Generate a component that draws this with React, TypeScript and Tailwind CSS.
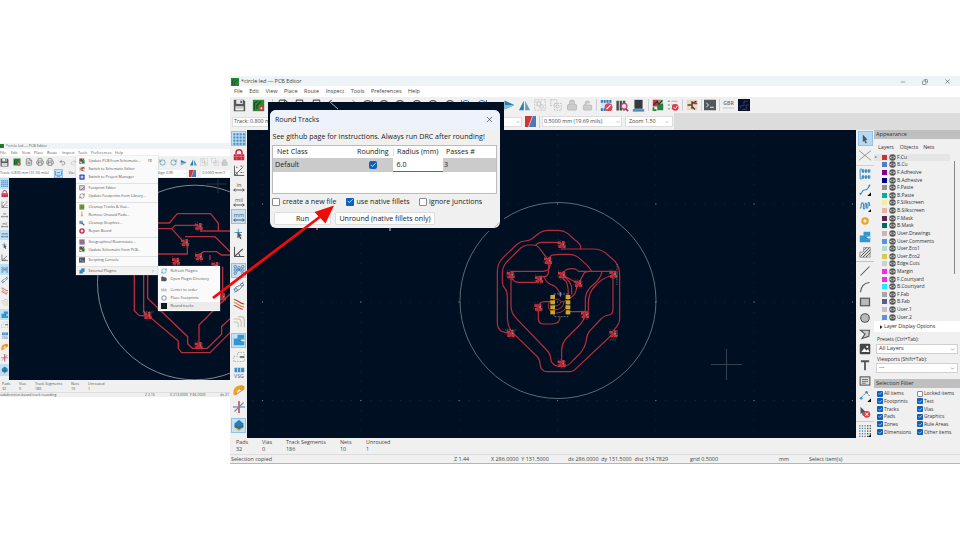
import React from "react";
import {
  FileText, Printer, Undo2, Redo2, Lock, LockOpen, RotateCw, RotateCcw,
  Minus, X, Check, ChevronDown, ChevronRight, RefreshCw, FolderOpen, Search, ZoomIn, ZoomOut,
  Puzzle, Copy,
} from "lucide-react";

const FONT = "font-['Open_Sans','Noto_Sans',sans-serif]";

type IconName = string;

function Glyph({ n }: { n: IconName }) {
  const k = "#555";
  const b = "#3d8fc6";
  switch (n) {
    case "save":
      return <g><path d="M1 1h12l2 2v12H1z" fill="#55595c" /><path d="M4 1h8v5H4z" fill="#e8e8e8" /><path d="M9 2h2v3H9z" fill="#55595c" /><path d="M3 9h10v5H3z" fill="#f4f4f4" /><path d="M4 11h8" stroke="#999" /></g>;
    case "grid":
      return <g fill={b}>{[1.8, 6, 10.200, 14.400].map((x) => [1.800, 6, 10.200, 14.400].map((y) => <rect key={x + "-" + y} x={x - 1.4} y={y - 1.4} width="2.800" height="2.800" />))}</g>;
    case "gridgray":
      return <g fill={k}>{[1, 4.5, 8, 11.5, 15].map((x) => [1, 4.5, 8, 11.5, 15].map((y) => <rect key={x + "-" + y} x={x - 0.8} y={y - 0.8} width="1.8" height="1.8" fill={x < 9 ? "#5e87a3" : k} />))}<path d="M16 12v4h-4z" fill="#111" /></g>;
    case "redlock":
      return <g><path d="M4 7V5q0-4 4-4t4 4v2" fill="none" stroke="#c9283e" strokeWidth="2" /><rect x="1" y="7" width="14" height="8" fill="#c9283e" /><path d="M0 10h16M5 7v8M11 7v8" stroke="#e78591" strokeWidth=".8" /></g>;
    case "polar":
      return <g fill="none" stroke={k} strokeWidth="1.2"><path d="M2 1v13h13M2 14L13 3M6 14q0-3-3-5" /><path d="M4 3h3M10 10h4M10 1.500h4" strokeDasharray="2 1" /></g>;
    case "in": case "mil": case "mm":
      return <g><text x="8" y="8" textAnchor="middle" fontSize="7.500" fill={k} fontFamily="Open Sans">{n}</text><path d="M1 12h14M3 10l-2 2 2 2M13 10l2 2-2 2" fill="none" stroke={k} strokeWidth="1.3" /></g>;
    case "cursor":
      return <g><path d="M7 1v12M2 6h10" stroke={b} strokeWidth="1.2" /><path d="M6 5l6 5-2.500.500 2 3.500-2 1-1.500-3.500-2 2z" fill={k} /></g>;
    case "angle":
      return <g fill="none" stroke={k} strokeWidth="1.5"><path d="M2 1v13h13M2 14L13 4M9 14q0-3-2-4.500" /></g>;
    case "rats":
      return <g fill="none" stroke="#487ba6" strokeWidth="1"><path d="M3 4l10 8M3 12l10-8M3 8h10" />{[3, 13].map((x) => [3.500, 8, 12.500].map((y) => <circle key={x + "," + y} cx={x} cy={y} r="1.700" fill="#b9dcf5" />))}<circle cx="8" cy="5" r="1.700" fill="#b9dcf5" /></g>;
    case "curve":
      return <g fill="none" stroke="#777" strokeWidth="1.2"><path d="M1 12L4 8 9 6 14 1M2 15l7-4 5-6" /><circle cx="12" cy="5" r="2" stroke={b} /><circle cx="4" cy="12" r="2" stroke={b} /></g>;
    case "redtracks":
      return <g fill="none" strokeWidth="1.6"><path d="M1 2C6 2 9 8 15 8" stroke="#c33b3b" /><path d="M1 6C6 6 8 12 15 12" stroke="#d88b36" /><path d="M1 10C6 10 8 15 13 15" stroke="#c33b3b" /></g>;
    case "pale":
      return <g fill="none" strokeWidth="1.4"><path d="M1 4h6q4 0 4 4v7" stroke="#eab29b" /><path d="M1 8h3q3 0 3 3v4" stroke="#b7cfb0" /><path d="M7 1h4q4 0 4 5v9" stroke="#b5b5b5" /></g>;
    case "zone":
      return <g><path d="M1 15V6h5V1h9v14z" fill="#3296cf" /><path d="M8 6h7v5H8z" fill="#6db9e2" /><circle cx="10" cy="8.500" r="2" fill="#28719d" /><path d="M10 8.500h6" stroke="#d7edf9" strokeWidth="1.500" /></g>;
    case "zoneout":
      return <g><path d="M1 14V7h5V2h9v12z" fill="none" stroke="#a0a0a0" strokeDasharray="2 1.500" /><path d="M9 8h6" stroke="#555" strokeWidth="2" /></g>;
    case "via":
      return <g><rect x="2" y="1" width="13" height="6" fill={b} /><path d="M6 1v6M10 1v6" stroke="#fff" strokeWidth=".8" /><text x="8" y="15" textAnchor="middle" fontSize="7" fill="#246b9c" fontFamily="Open Sans">VSG</text></g>;
    case "pad":
      return <g><path d="M3 14Q2 4 12 4" fill="none" stroke="#eea421" strokeWidth="5" /><circle cx="12" cy="5" r="3.500" fill="#e99c18" /><path d="M2 15L13 8" stroke="#d9674b" /></g>;
    case "axis":
      return <g strokeWidth="1.5"><path d="M8 0v16" stroke="#cd3d4d" strokeWidth="2" /><path d="M0 8h16" stroke="#4489bb" /><path d="M2 14L14 2" stroke="#888" /></g>;
    case "layers":
      return <g><path d="M8 1l6 5-6 5-6-5z" fill="#277fb8" /><path d="M2 6v5l6 4 6-4V6l-6 4z" fill="#2e6d93" /><path d="M4 12l4 3 4-3" stroke="#d8aa33" fill="none" strokeWidth="1.500" /></g>;
    case "arrow":
      return <path d="M5 2l6.500 7-3 .300L10.500 13l-1.800.900-1.600-3.600L5 12z" fill="#4f5358" />;
    case "cross":
      return <path d="M0 2l16 13M16 2L0 15" stroke="#8d8d8d" strokeWidth="1.200" />;
    case "fpt":
      return <g><path d="M4 1.500H1.500v13H4M3 4h12M3 12h12" fill="none" stroke={b} strokeWidth="1.300" /><path d="M4 4h12M4 12h12" stroke={b} strokeWidth="4.500" strokeDasharray="2.600 1.300" /></g>;
    case "route":
      return <g><path d="M1 13C5 14 3 8 7 8s5-2 7-6" fill="none" stroke={b} strokeWidth="1.500" /><circle cx="2" cy="13" r="1.300" fill={b} /><circle cx="14" cy="2" r="1.300" fill={b} /><path d="M16 11v5h-5z" fill="#111" /></g>;
    case "meander":
      return <g><path d="M1 11c2 0 2-2 2-5s3-3 3 0-1 6 1 6 0-8 2-8 0 7 2 7 0-8 2-8 0 6 2 4" fill="none" stroke={b} strokeWidth="1.500" /><path d="M16 12v4h-4z" fill="#111" /></g>;
    case "ring":
      return <circle cx="8" cy="8" r="3.600" fill="none" stroke="#eaa12b" strokeWidth="2.800" />;
    case "hatch":
      return <g><path d="M1 15V8h5V2h9v13z" fill="#ddd" stroke="#777" strokeWidth=".8" /><path d="M2 14L14 2M5 15L15 5M9 15l6-6M7 5l3-3" stroke="#555" strokeWidth="1.200" /></g>;
    case "line": return <path d="M2 14L14 2" stroke={k} strokeWidth="1.400" />;
    case "arc": return <path d="M2 15Q3 3 14 2" fill="none" stroke={k} strokeWidth="1.400" />;
    case "rect": return <rect x="2" y="3" width="12" height="10" fill="#b9b9b9" stroke={k} strokeWidth="1.600" />;
    case "circle": return <circle cx="8" cy="8" r="5.700" fill="#b9b9b9" stroke={k} strokeWidth="1.500" />;
    case "poly": return <path d="M2 3h12l-1 8-9 3 4-6z" fill="#ccc" stroke={k} strokeWidth="1.500" />;
    case "image": return <g><rect x="1" y="1" width="14" height="14" rx="1.500" fill="#454545" /><path d="M3 12l4-5 3 3 2-2 2 4z" fill="#fff" /><circle cx="11" cy="5" r="1.500" fill="#fff" /></g>;
    case "text": return <path d="M2.500 3h11M8 3v12" stroke={k} strokeWidth="2.400" />;
    case "textbox": return <g><rect x="1.500" y="2.500" width="13" height="11" fill="#ddd" stroke={k} strokeWidth="1.400" /><path d="M4 6h8M4 8.500h8M4 11h5" stroke={k} /></g>;
    case "dim": return <g><path d="M2 11L10 3l4 5" fill="none" stroke={b} strokeWidth="1.300" strokeDasharray="4 1" /><circle cx="3" cy="11" r="1.800" fill={b} /><circle cx="10" cy="3" r="1.800" fill={b} /><path d="M16 11v5h-5z" fill="#111" /></g>;
    case "delete": return <g><path d="M2 1l7 7-3 .5 1 4-2 .5-1-4-2 2z" fill="#555" /><circle cx="10.500" cy="11" r="4.500" fill="#dc3c4b" /><path d="M8.500 9l4 4M12.500 9l-4 4" stroke="#fff" strokeWidth="1.400" /></g>;
    case "board":
      return <g><rect x="1" y="1" width="14" height="14" fill="#2e8a38" /><path d="M3 13V5l4-2M6 12V8l5-5" fill="none" stroke="#1c4a22" strokeWidth="1.500" /><circle cx="11.500" cy="11.500" r="3.300" fill="#cf3e4b" /><circle cx="11.500" cy="11.500" r="1.200" fill="#f0f0f0" /></g>;
    case "logo":
      return <g><rect width="16" height="16" fill="#258530" /><path d="M3 14V5l4-3M7 14V9l6-6" fill="none" stroke="#174d1c" strokeWidth="1.500" /></g>;
    case "tri": return <g><path d="M2 2l13 6-13 6z" fill="#277eb0" /><path d="M2 8h13L2 14z" fill="#8cbad3" /></g>;
    case "triup": return <g><path d="M7 1v14H0z" fill="#277eb0" /><path d="M9 1v14h7z" fill="#5aa0c7" /></g>;
    case "group": return <g fill="none" stroke="#c3c3c3" strokeWidth="1.300"><rect x="1" y="1" width="14" height="14" strokeDasharray="2.500 1.500" /><rect x="4" y="4" width="5" height="5" /><circle cx="10" cy="10" r="2.500" /></g>;
    case "ungroup": return <g fill="none" stroke="#c3c3c3" strokeWidth="1.300"><rect x="1" y="1" width="8" height="8" strokeDasharray="2.500 1.200" /><rect x="6" y="6" width="9" height="9" strokeDasharray="2.500 1.200" /><circle cx="10" cy="10" r="2" /></g>;
    case "drc": return <g><rect x="1" y="2" width="14" height="12" fill="#d7e4ee" /><path d="M1 3h14M1 13h14" stroke="#3577b4" strokeWidth="3.500" strokeDasharray="2.500 1" /><circle cx="10.500" cy="10" r="4.800" fill="#dd4657" /><path d="M8 12.500l5-5" stroke="#fff" strokeWidth="1.500" /></g>;
    case "lib": return <g><path d="M2 2v12M6 2v12M10 2v12" stroke="#4b4b4b" strokeWidth="3" /><circle cx="10" cy="9" r="3.500" fill="#f4dce2" stroke="#b44969" strokeWidth="1.500" /><path d="M12 12l3 3" stroke="#aa3051" strokeWidth="2" /></g>;
    case "chip": return <g><rect x="3" y="1" width="10" height="11" fill="#353a40" /><path d="M1 14h14" stroke="#438eb8" strokeWidth="3" /></g>;
    case "update": return <g><rect x="1" y="1" width="8" height="9" fill="#c43a45" /><rect x="7" y="6" width="8" height="9" fill="#27833b" /><path d="M9 1h5v4H9z" fill="#68a858" /><path d="M2 8l5-5 2 4 5-5" stroke="#333" strokeWidth="1.500" fill="none" /><path d="M2 11v4h4" stroke="#29853a" strokeWidth="2.500" fill="none" /></g>;
    case "checklist": return <g><path d="M1 3h3M1 8h3M1 13h3" stroke="#8dbb8d" strokeWidth="2" /><path d="M6 3h8M6 8h5M6 13h3" stroke="#aaa" strokeWidth="1.500" /><circle cx="11" cy="11" r="4.500" fill="#da3c4d" /><path d="M9 11l2 2 3-4" stroke="#fff" fill="none" strokeWidth="1.300" /></g>;
    case "sch": return <g><rect x="1" y="1" width="14" height="14" fill="#ead8c3" /><path d="M2 8h5M8 3v10M8 6l6-3M8 10l4 4" stroke="#593f38" strokeWidth="2" fill="none" /><path d="M10 6h5" stroke="#bf3038" strokeWidth="2" /></g>;
    case "term": return <g><rect y="1" width="16" height="14" fill="#52585b" /><path d="M3 5l3 3-3 3M8 11h5" stroke="#eee" fill="none" strokeWidth="1.300" /></g>;
    case "gbr": return <g><text x="8" y="7.500" fontSize="6.300" fontWeight="600" textAnchor="middle" fill="#666" fontFamily="Open Sans">GBR</text><path d="M1 11h14" stroke="#ccc" strokeWidth="1.500" /></g>;
    case "dark": return <g><rect width="16" height="16" fill="#0a1028" /><path d="M3 13V9h5V3h5M5 14h6V8h3" stroke="#334e90" fill="none" /></g>;
    case "layerpair": return <g><rect width="16" height="16" fill="#4e79b4" /><path d="M0 0h11L5 16H0z" fill="#cf3638" /><path d="M11 0L5 16" stroke="#eee" /></g>;
    case "autow": return <g fill="none" stroke="#3a80b3" strokeWidth="1.500"><path d="M1 2v10h14V2M5 15h6M4 6h8" /></g>;
    case "ps": return <g><rect x="1" y="1" width="14" height="14" rx="2" fill="#334bc7" /><circle cx="8" cy="8" r="4" fill="#c9d1ff" /></g>;
    case "fped": return <g><rect x="2" y="2" width="12" height="11" fill="#e9d8e1" stroke="#4e77a6" strokeWidth="2" /><path d="M5 14l9-9" stroke="#c74456" strokeWidth="2.500" /></g>;
    case "clean": return <g><rect x="1" y="1" width="13" height="14" fill="#77963c" /><path d="M4 12l5-8M9 12l5-4" stroke="#4c6929" strokeWidth="2" /></g>;
    case "brush": return <path d="M6 1h3v8l3 5H4l2-5z" fill="#dcaf62" />;
    case "cleang": return <g><rect x="1" y="2" width="9" height="9" fill="#6f9cc1" /><path d="M7 7l7 7" stroke="#567" strokeWidth="3" /></g>;
    case "repair": return <circle cx="8" cy="8" r="5.500" fill="#f5dce3" stroke="#c62445" strokeWidth="3.500" />;
    case "geo": return <g><rect x="1" y="1" width="14" height="14" fill="#5e87ae" /><path d="M2 5h8M6 10h9" stroke="#d95160" strokeWidth="3" /></g>;
    case "ringd": return <circle cx="8" cy="8" r="6" fill="none" stroke="#56708d" strokeWidth="2" />;
    case "plug": return <path d="M0 6h16M1 10h14" stroke="#888" strokeWidth="2" strokeDasharray="4 1" />;
    case "black": return <g><rect width="16" height="16" fill="#11151d" /><path d="M3 12l5-8 4 7" stroke="#3a455a" fill="none" /></g>;
    default: return null;
  }
}

function Ic({ n, c = "size-[12px]" }: { n: IconName; c?: string }) {
  return <svg viewBox="0 0 16 16" className={`shrink-0 ${c}`}><Glyph n={n} /></svg>;
}

const LEFT: [string, string, boolean][] = [
  ["grid", "h-[17px]", true], ["redlock", "h-[16px]", false], ["polar", "h-[16px]", false],
  ["in", "h-[15px]", false], ["mil", "h-[15px]", false], ["mm", "h-[15px]", true],
  ["cursor", "h-[20px]", false], ["angle", "h-[16px]", false], ["rats", "h-[20px]", true],
  ["curve", "h-[14px]", false], ["redtracks", "h-[20px]", false], ["pale", "h-[16px]", false],
  ["zone", "h-[20px]", true], ["zoneout", "h-[14px]", false], ["via", "h-[18px]", false],
  ["pad", "h-[16px]", false], ["axis", "h-[18px]", false], ["layers", "h-[18px]", true],
];

const LEFT_SMALL: [string, string, boolean][] = [
  ["grid", "h-[11px]", true], ["redlock", "h-[10px]", false], ["polar", "h-[11px]", false],
  ["in", "h-[10px]", false], ["mil", "h-[10px]", false], ["mm", "h-[10px]", true],
  ["cursor", "h-[12px]", false], ["angle", "h-[12px]", false], ["rats", "h-[11px]", true],
  ["curve", "h-[10px]", false], ["redtracks", "h-[12px]", false], ["pale", "h-[12px]", false],
  ["zone", "h-[11px]", true], ["zoneout", "h-[9px]", false], ["via", "h-[13px]", false],
  ["pad", "h-[10px]", false], ["axis", "h-[12px]", false], ["layers", "h-[12px]", true],
];

const RIGHT: [string, string, boolean][] = [
  ["arrow", "h-[17px]", true], ["cross", "h-[16px]", false],
  ["fpt", "h-[17px] mt-[2px] border-t border-[#e6cbbd]", false], ["route", "h-[16px]", false], ["meander", "h-[15px]", false],
  ["ring", "h-[16px]", false], ["zone", "h-[15px]", false], ["hatch", "h-[16px]", false],
  ["line", "h-[18px] mt-[1px] border-t border-[#c4c4c4]", false], ["arc", "h-[15px]", false], ["rect", "h-[16px]", false],
  ["circle", "h-[16px]", false], ["poly", "h-[15px]", false], ["image", "h-[16px]", false],
  ["text", "h-[16px]", false], ["textbox", "h-[15px]", false], ["dim", "h-[16px]", false],
  ["delete", "h-[16px]", false], ["gridgray", "h-[18px] mt-[1px] border-t border-[#ccc]", false],
];

const LAYERS: [string, string][] = [
  ["F.Cu", "bg-[#c83434]"], ["B.Cu", "bg-[#4d7fc4]"], ["F.Adhesive", "bg-[#840084]"], ["B.Adhesive", "bg-[#000084]"],
  ["F.Paste", "bg-[#968f8a]"], ["B.Paste", "bg-[#00b0a0]"], ["F.Silkscreen", "bg-[#f2eda1]"], ["B.Silkscreen", "bg-[#e8b2a7]"],
  ["F.Mask", "bg-[#57264f]"], ["B.Mask", "bg-[#02695f]"], ["User.Drawings", "bg-[#cbb6b6]"], ["User.Comments", "bg-[#5994dc]"],
  ["User.Eco1", "bg-[#b4dbd2]"], ["User.Eco2", "bg-[#d8c852]"], ["Edge.Cuts", "bg-[#c5d4cf]"], ["Margin", "bg-[#ff26e2]"],
  ["F.Courtyard", "bg-[#f32bd8]"], ["B.Courtyard", "bg-[#26e9ff]"], ["F.Fab", "bg-[#a5a5aa]"], ["B.Fab", "bg-[#585d84]"],
  ["User.1", "bg-[#c2c2c2]"], ["User.2", "bg-[#5994dc]"],
];

const FILTERS: [string, string, boolean][] = [
  ["All items", "Locked items", false], ["Footprints", "Text", true], ["Tracks", "Vias", true],
  ["Pads", "Graphics", true], ["Zones", "Rule Areas", true], ["Dimensions", "Other items", true],
];

const PADS = [[245, 74], [204, 122], [92, 165], [177, 178], [246, 165], [295, 191], [400, 163], [175, 262], [315, 285], [92, 341], [400, 342], [245, 431]];

function Footprints() {
  return (
    <g>
      {PADS.map(([x, y], i) => (
        <g key={i} transform={`translate(${x} ${y})`}>
          <path d="M-12-9H-1V-1H-12zM-10 2H0V10H-10zM1-11H9V-1H1zM2 2H12V10H2z" fill="#cf3038" />
          <path d="M-6-5H6V6H-6z" fill="#a82d3a" />
          <path d="M-10-16v7M-3-14v5M12-8v12M-15 3h5M-6 13h16" stroke="#8c8496" strokeWidth="1.500" strokeDasharray="2.500 2" opacity=".8" />
          <path d="M3-3h5v5H3z" fill="#8c8794" />
        </g>
      ))}
      <path d="M411 132v64M76 330h34M390 360h18M411 330v22" stroke="#a6a5b2" strokeWidth="2" strokeDasharray="3 2" opacity=".8" />
    </g>
  );
}

function RoundedBoard() {
  return (
    <g transform="translate(233 90) scale(.3333)">
      <g fill="none" stroke="#b62d3a" strokeWidth="3.600" strokeLinecap="round">
        <path d="M302 86V80Q300 70 285 60L264 41Q250 31 232 31H205Q187 31 174 42L158 55Q148 63 135 63Q123 63 112 72L70 112Q52 130 52 154V308Q52 325 64 334L90 341" />
        <path d="M204 120L190 100L178 84Q172 76 160 75H143Q132 76 122 84L80 126Q67 142 67 160V186Q67 198 75 206Q82 214 82 230V296Q84 325 100 340L170 408Q180 418 180 432Q182 455 202 455H272Q280 455 288 446L395 345" />
        <path d="M166 76Q174 67 184 67H240" />
        <path d="M245 87H340Q361 87 376 98L406 125Q419 142 419 165V298Q419 312 400 332" />
        <path d="M205 118L212 108Q218 103 240 103H266Q284 103 296 113L322 136L335 153" />
        <path d="M92 154H190Q210 152 210 136V120" />
        <path d="M92 170L100 181Q106 187 116 187H166L178 176" />
        <path d="M93 170V256Q93 278 106 292L200 390Q212 402 212 416Q214 440 245 440" />
        <path d="M178 170H192Q204 170 206 155V125M192 170Q200 192 220 196Q238 208 240 226" />
        <path d="M245 165Q255 146 272 146H280Q290 147 296 154H400" />
        <path d="M245 165Q250 180 258 184Q265 195 265 225M245 165Q268 178 275 200V222M248 165L292 190" />
        <path d="M328 154Q312 154 309 166L295 190Q290 200 288 212Q284 228 266 236" />
        <path d="M366 154Q362 176 342 192Q316 212 316 238V285M392 168Q370 172 345 198Q325 218 325 250V284" />
        <path d="M399 165V268Q399 284 386 285Q371 287 360 300L330 332Q320 344 319 360Q316 382 300 400L280 420Q265 440 245 440" />
        <path d="M315 285Q311 304 296 318L260 354Q245 370 245 392V430M265 275H315" />
        <path d="M175 262V298Q177 312 192 312H215Q240 312 240 292M175 262Q177 245 194 245H213" />
        <path d="M212 240Q196 260 214 276M224 242Q232 232 240 242Q250 250 258 240M224 258Q240 258 243 246M224 270Q252 268 252 244M228 280Q260 276 258 256" strokeWidth="3" />
      </g>
      <Footprints />
      <path d="M222 222h42v68h-42z" fill="none" stroke="#d3cfd8" strokeWidth="1.800" strokeDasharray="6 3" opacity=".8" />
      <path d="M242 216v14" stroke="#a08ad0" strokeWidth="3" />
      {[225, 241, 256, 271].map((y) => (
        <g key={y} fill="#d2a52b"><rect x="211" y={y} width="14" height="12" /><rect x="257" y={y} width="14" height="12" /></g>
      ))}
    </g>
  );
}

function MainCanvas() {
  const gx = [15.500, 113.800, 212.100, 310.500, 408.800, 507.100, 605.400];
  const gy = [74, 172, 270.500];
  return (
    <svg width="609" height="308" className="block shrink-0 bg-[#000f21]">
      <g stroke="#1c2c3f" strokeWidth=".8">
        {gx.map((x) => <path key={x} d={`M${x} 5V308`} strokeDasharray="1 8.830" />)}
        {gy.map((y) => <path key={y} d={`M5.500 ${y}H609`} strokeDasharray="1 8.830" />)}
      </g>
      <g fill="#66747f">{gx.map((x) => gy.map((y) => <rect key={x + "_" + y} x={x - 0.6} y={y - 0.6} width="1.200" height="1.200" />))}</g>
      <circle cx="311" cy="170.500" r="98" fill="none" stroke="#75808a" strokeWidth=".8" />
      <path d="M464 234.500h31M479.500 219v31" stroke="#35414e" strokeWidth="1" />
      <RoundedBoard />
    </svg>
  );
}

function SmallCanvas() {
  return (
    <svg width="221" height="202" viewBox="9 178 221 202" className="block shrink-0 bg-[#000f21]">
      <circle cx="194.800" cy="282.500" r="97.300" fill="none" stroke="#8a959d" strokeWidth=".9" />
      <path d="M207 184h20M218 179v14" stroke="#2c3a49" strokeWidth=".8" />
      <g transform="translate(0 140) scale(.3333)" fill="none" stroke="#b72e3a" strokeWidth="4">
        <path d="M470 249H508L532 221H632L655 250V272M470 266H515L525 256H590M515 266L550 305M600 273H690M555 290H645L690 335" />
        <path d="M470 342H562V305M590 350L610 335H650L665 345H690M630 345V360M403 380V512L418 527H445" />
        <path d="M431 380V515L535 603V625L545 638H630L690 578M443 380V475L563 590V611L577 625H622L665 583V560L690 536M597 615V555L690 462M668 380V480" />
      </g>
      <g transform="translate(117 202) scale(.3333)"><Footprints /></g>
    </svg>
  );
}

function Box({ on, c }: { on: boolean; c: string }) {
  return (
    <span className={`flex shrink-0 items-center justify-center rounded-[1px] ${c} ${on ? "bg-[#0c62ba] text-white" : "border border-[#8a8a8a] bg-white"}`}>
      {on && <Check className="size-[80%]" strokeWidth={3} />}
    </span>
  );
}

function Sep() {
  return <span className="h-[12px] w-px shrink-0 bg-[#cfcfcf]" />;
}

function Panel() {
  return (
    <aside className="flex w-[86px] shrink-0 flex-col bg-[#f0f0f0] text-[5px] leading-none tracking-[-0.040px] text-[#333]">
      <div className="flex h-[9px] items-center bg-[#bfbfbf] pl-[2px] pt-px text-[5.600px]">Appearance</div>
      <div className="flex h-[14px] items-center gap-[6px] pl-[4px] pt-[3px] text-[5.300px]">
        <span>Layers</span><span>Objects</span><span className="-ml-px">Nets</span>
      </div>
      <div className="flex h-[168px] justify-between">
        <div className="flex w-[76px] flex-col pt-[0.500px]">
          {LAYERS.map(([name, color], i) => (
            <div key={name} className={`flex h-[7.620px] shrink-0 items-center gap-[2px] ${i === 0 ? "bg-[#e5e5e5]" : ""}`}>
              <span className="w-[2.500px] pl-[1px] text-[4px] text-[#3f6fd0]">{i === 0 ? "▸" : ""}</span>
              <span className={`ml-[3.500px] size-[5px] ${color}`} />
              <svg viewBox="0 0 12 12" className="size-[7px]"><circle cx="6" cy="6" r="5.500" fill="#555" /><path d="M1 6Q6 1.500 11 6Q6 10.500 1 6" fill="#d4d4d4" /><circle cx="6" cy="6" r="1.900" fill="#4f4f4f" /></svg>
              <span className="-ml-[1px]">{name}</span>
            </div>
          ))}
        </div>
        <span className="mr-[5px] mt-[8px] h-[113px] w-px bg-[#888]" />
      </div>
      <div className="flex h-[11px] items-center gap-[1.500px] bg-white pl-[6px] text-[5.300px] tracking-[-0.120px]"><svg viewBox="0 0 4 6" className="h-[4px] w-[2.500px]"><path d="M0 0l4 3-4 3z" fill="#222" /></svg>Layer Display Options</div>
      <div className="flex h-[12px] items-end pb-[2px] pl-[3px]">Presets (Ctrl+Tab):</div>
      <div className="mx-[2px] flex h-[10px] items-center justify-between border border-[#d0d0d0] bg-white px-[2px] text-[5.700px]">All Layers<ChevronDown className="size-[5px]" /></div>
      <div className="flex h-[9px] items-end pb-[1px] pl-[3px]">Viewports (Shift+Tab):</div>
      <div className="mx-[2px] flex h-[10px] items-center justify-between border border-[#d0d0d0] bg-white px-[2px] text-[5.700px]">---<ChevronDown className="size-[5px]" /></div>
      <div className="mt-[6px] flex h-[9px] items-center bg-[#bfbfbf] pl-[2px] pt-px text-[5.600px]">Selection Filter</div>
      <div className="flex flex-col pt-[2px]">
        {FILTERS.map(([a, b, on]) => (
          <div key={a} className="flex h-[7.650px] items-center pl-[3px]">
            <span className="flex w-[40px] items-center gap-[1px] whitespace-nowrap"><Box on c="size-[6px]" />{a}</span>
            <span className="flex items-center gap-[1px] whitespace-nowrap"><Box on={on} c="size-[6px]" />{b}</span>
          </div>
        ))}
      </div>
    </aside>
  );
}

function MainWindow() {
  return (
    <section className="absolute left-[230px] top-[76px] flex h-[388px] w-[730px] flex-col overflow-hidden border-b border-[#b5b5b5] bg-[#f0f0f0] text-[5.400px] leading-none text-[#444]">
      <header className="flex h-[10px] shrink-0 items-center bg-[#ecf4f7] pl-px pt-px">
        <Ic n="logo" c="size-[8px]" />
        <span className="ml-[2px] w-[659px] text-[5.500px] tracking-[-0.030px]">*circle led — PCB Editor</span>
        <Minus className="mr-[16px] size-[6px]" /><Copy className="mr-[16px] size-[6px] -scale-x-100" /><X className="size-[7px]" />
      </header>
      <nav className="flex h-[11px] shrink-0 items-center gap-[6.500px] bg-white pl-[4px] text-[5.500px]">
        {["File", "Edit", "View", "Place", "Route", "Inspect", "Tools", "Preferences", "Help"].map((m) => <span key={m}>{m}</span>)}
      </nav>
      <div className="flex h-[16px] shrink-0 items-center pl-[3px]">
        <Ic n="save" c="mr-[6px] size-[13px]" />
        <Ic n="board" c="size-[13px]" /><span className="w-[7px]" />
        <div className="flex w-[232px] items-center gap-[3.500px] text-[#555]">
          <Sep /><FileText className="size-[13px]" /><Printer className="size-[13px]" /><Printer className="size-[13px]" />
          <Undo2 className="size-[14px]" /><Redo2 className="size-[14px] text-[#aaa]" /><RefreshCw className="size-[13px]" />
          <ZoomIn className="size-[13px]" /><ZoomOut className="size-[13px]" /><Search className="size-[13px]" /><Search className="size-[13px]" />
          <Search className="size-[13px]" /><RotateCcw className="size-[12px] text-[#2d7fae]" /><RotateCw className="size-[12px] text-[#2d7fae]" />
        </div>
        <Ic n="tri" c="mr-[4px] size-[12px] -ml-px" />
        <div className="flex items-center gap-[4px] text-[#bbb]">
          <Ic n="triup" c="size-[11px]" /><Ic n="group" c="size-[12px]" /><Ic n="ungroup" c="size-[12px]" />
          <Lock className="size-[12px] fill-[#ccc]" /><LockOpen className="size-[11px] fill-[#ccc]" />
        </div>
        <div className="ml-[3px] flex items-center gap-[3px]">
          <Sep /><Ic n="drc" c="size-[13px]" /><Ic n="lib" c="size-[13px]" /><Ic n="chip" c="size-[13px]" />
          <Sep /><Ic n="update" c="size-[12px]" /><Ic n="checklist" c="size-[12px]" />
          <Sep /><Ic n="sch" c="size-[12px]" /><Sep /><Ic n="term" c="size-[12px] -ml-px" /><Sep /><Ic n="gbr" c="size-[13px] -ml-px" /><Ic n="dark" c="size-[12px]" />
        </div>
      </div>
      <div className="flex h-[17px] shrink-0 items-center bg-[#dcdcdc]">
        <div className="flex h-full w-[444px] items-center bg-[#f0f0f0] pl-[2px]">
          <div className="flex h-[10px] w-[290px] items-center justify-between border border-[#ddd] bg-white px-[1px]"><span className="tracking-[-0.050px]">Track: 0.800 m</span><ChevronDown className="size-[4px]" /></div>
          <Ic n="layerpair" c="mx-[3px] size-[11px]" /><Sep />
          <div className="ml-[2px] flex h-[11px] w-[80px] items-center justify-between border border-[#ddd] bg-white px-[1px]"><span>0.5000 mm (19.69 mils)</span><ChevronDown className="size-[4px]" /></div>
          <div className="ml-[3px] flex h-[11px] w-[48px] items-center justify-between border border-[#ddd] bg-white px-[3px]"><span>Zoom 1.50</span><ChevronDown className="size-[4px]" /></div>
        </div>
      </div>
      <div className="flex h-[308px] shrink-0">
        <div className="flex w-[17px] shrink-0 flex-col">
          {LEFT.map(([n, h, on]) => (
            <div key={n} className={`flex shrink-0 items-center justify-center ${h}`}>
              <span className={`flex items-center justify-center ${on ? "h-[15px] w-[15px] border border-[#8dc3ec] bg-[#c8e2f5]" : ""}`}><Ic n={n} /></span>
            </div>
          ))}
        </div>
        <MainCanvas />
        <div className="flex w-[18px] shrink-0 flex-col">
          {RIGHT.map(([n, h, on]) => (
            <div key={n} className={`flex shrink-0 items-center justify-center ${h}`}>
              <span className={`flex items-center justify-center ${on ? "h-[15px] w-[15px] border border-[#8dc3ec] bg-[#b7d9f2]" : ""}`}><Ic n={n} /></span>
            </div>
          ))}
        </div>
        <Panel />
      </div>
      <div className="flex h-[16px] shrink-0 items-center pl-[6px] leading-[7.500px]">
        <span className="w-[26px]">Pads<br />32</span><span className="w-[24px]">Vias<br />0</span>
        <span className="w-[54px]">Track Segments<br />186</span><span className="w-[26px]">Nets<br />10</span><span>Unrouted<br />1</span>
      </div>
      <div className="flex h-[9px] shrink-0 items-center whitespace-nowrap border-t border-[#ddd] pl-[1px] pt-px">
        <span className="w-[223px]">Selection copied</span><span className="w-[37px]">Z 1.44</span><span className="w-[77px]">X 286.0000&nbsp; Y 131.5000</span>
        <span className="w-[122px]">dx 286.0000&nbsp; dy 131.5000&nbsp; dist 314.7829</span><span className="w-[89px]">grid 0.5000</span><span className="w-[30px]">mm</span><span>Select item(s)</span>
      </div>
    </section>
  );
}

const MENU: [string, string, string][] = [
  ["update", "Update PCB from Schematic...", ""], ["sch", "Switch to Schematic Editor", ""], ["ps", "Switch to Project Manager", ""],
  ["fped", "Footprint Editor", "mt-[2px] border-t border-[#e2e2e2]"], ["refresh", "Update Footprints from Library...", ""],
  ["clean", "Cleanup Tracks & Vias...", "mt-[2px] border-t border-[#e2e2e2]"], ["brush", "Remove Unused Pads...", ""], ["cleang", "Cleanup Graphics...", ""], ["repair", "Repair Board", ""],
  ["geo", "Geographical Reannotate...", "mt-[2px] border-t border-[#e2e2e2]"], ["update", "Update Schematic from PCB...", ""],
  ["term", "Scripting Console", "mt-[2px] border-t border-[#e2e2e2]"], ["puzzle", "External Plugins", "mt-[2px] border-t border-[#e2e2e2] bg-[#f1f1f1]"],
];

function SmallWindow() {
  return (
    <section className="absolute left-0 top-[143px] flex h-[254px] w-[230px] flex-col overflow-hidden bg-[#f0f0f0] text-[3.700px] leading-none text-[#555]">
      <header className="flex h-[6px] shrink-0 items-center bg-[#ecf4f7]"><Ic n="logo" c="size-[4px]" /><span className="ml-[2px]">*circle led — PCB Editor</span></header>
      <nav className="flex h-[7px] shrink-0 items-center whitespace-nowrap bg-white">
        <span className="w-[11px]">File</span><span className="w-[11px]">Edit</span><span className="w-[12px]">View</span><span className="w-[13px]">Place</span>
        <span className="w-[15px]">Route</span><span className="w-[16px]">Inspect</span><span className="w-[13px]">Tools</span><span className="w-[24px]">Preferences</span><span>Help</span>
      </nav>
      <div className="flex h-[12px] shrink-0 items-center text-[#666]">
        <Ic n="save" c="size-[9px]" /><Ic n="board" c="ml-[4px] size-[8px]" />
        <FileText className="ml-[4px] size-[8px]" /><Printer className="ml-[3px] size-[8px]" /><Printer className="ml-[2px] size-[8px]" />
        <Undo2 className="ml-[5px] size-[7px]" /><Redo2 className="ml-[4px] size-[7px] text-[#bbb]" />
        <RotateCcw className="ml-[82px] size-[7px] text-[#2d7fae]" /><RotateCw className="ml-[4px] size-[7px] text-[#2d7fae]" />
        <Ic n="tri" c="ml-[3px] size-[7px]" /><Ic n="triup" c="ml-[3px] size-[7px]" />
        <Ic n="group" c="ml-[3px] size-[8px]" /><Ic n="ungroup" c="ml-[3px] size-[8px]" /><Lock className="ml-[2px] size-[7px] fill-[#ccc] text-[#bbb]" />
      </div>
      <div className="flex h-[10px] shrink-0 items-center whitespace-nowrap">
        <span className="flex h-[7px] w-[54px] items-center bg-white">Track: 0.800 mm (31.50 mils)</span>
        <span className="ml-[1px] flex size-[9px] items-center justify-center border border-[#8dc3ec] bg-[#c8e2f5]"><Ic n="autow" c="size-[7px]" /></span>
        <span className="ml-[4px] w-[90px] pl-[1px]">Via:</span>
        <span className="flex h-[7px] w-[30px] items-center justify-between bg-white">Align (UR)<ChevronDown className="size-[3px]" /></span>
        <Ic n="layerpair" c="ml-[3px] size-[7px]" />
        <span className="ml-[5px] flex h-[7px] w-[29px] items-center bg-white pl-px">0.5000 mm (1</span>
      </div>
      <div className="flex h-[202px] shrink-0">
        <div className="flex w-[9px] shrink-0 flex-col">
          {LEFT_SMALL.map(([n, h, on]) => (
            <div key={n} className={`flex shrink-0 items-center justify-center ${h} ${on ? "bg-[#bfdff5]" : ""}`}><Ic n={n} c="size-[7.500px]" /></div>
          ))}
        </div>
        <SmallCanvas />
      </div>
      <div className="flex h-[12px] shrink-0 items-center pl-[2px] leading-[5px]">
        <span className="w-[17px]">Pads<br />32</span><span className="w-[16px]">Vias<br />0</span><span className="w-[36px]">Track Segments<br />186</span><span className="w-[17px]">Nets<br />10</span><span>Unrouted<br />1</span>
      </div>
      <div className="flex h-[5px] shrink-0 items-center whitespace-nowrap border-t border-[#ddd] text-[3.500px]">
        <span className="w-[145px]">subdirection-based track rounding</span><span className="w-[25px]">Z 2.16</span><span className="w-[50px]">X 213.0000&nbsp; Y 66.0000</span><span>dx 21</span>
      </div>
    </section>
  );
}

function Menus() {
  return (
    <div className="absolute left-[76px] top-[156px] flex items-start text-[3.750px] leading-none text-[#555]">
      <div className="flex h-[119px] w-[82px] flex-col bg-[#fafafa] pt-[0.700px] shadow-[0_0_1px_#999]">
        {MENU.map(([n, t, c], i) => (
          <div key={i} className={`flex shrink-0 items-center whitespace-nowrap pl-[3px] pr-[3px] ${c ? "h-[8.700px]" : "h-[8.100px]"} ${c}`}>
            {n === "refresh" ? <RefreshCw className="size-[6px]" /> : n === "puzzle" ? <Puzzle className="size-[6px] fill-[#2680c4] stroke-[#2680c4]" /> : <Ic n={n} c="size-[6px]" />}
            <span className="ml-[3.500px] grow">{t}</span>
            {i === 0 && <span className="mr-[3px]">F8</span>}
            {n === "puzzle" && <ChevronRight className="size-[4px]" />}
          </div>
        ))}
      </div>
      <div className="mt-[110px] flex h-[45px] w-[62px] flex-col bg-[#fafafa] pt-px shadow-[0_0_1px_#999]">
        {[["refresh", "Refresh Plugins"], ["folder", "Open Plugin Directory"], ["plug", "Center to order"], ["ringd", "Place Footprints"], ["black", "Round tracks"]].map(([n, t], i) => (
          <div key={n} className={`flex h-[8px] shrink-0 items-center whitespace-nowrap pl-[3px] ${i === 2 ? "mt-[3px]" : ""} ${i === 4 ? "bg-[#ececec]" : ""}`}>
            {n === "refresh" ? <RefreshCw className="size-[6px] text-[#2680c4]" /> : n === "folder" ? <FolderOpen className="size-[6px] fill-[#555]" /> : <Ic n={n} c="size-[6px]" />}
            <span className="ml-[3.500px]">{t}</span>
          </div>
        ))}
      </div>
    </div>
  );
}

function Dialog() {
  return (
    <div className="absolute left-[268px] top-[102px] flex h-[129px] w-[236px] flex-col bg-[#000f21]">
      <svg viewBox="0 0 236 8" className="h-[8px] w-full shrink-0"><path d="M62 0l8 7" stroke="#aab4bb" /></svg>
      <div className="ml-[2px] flex h-[118px] w-[230px] flex-col overflow-hidden rounded-[6px] bg-[#f0f0f0] text-[7.100px] leading-none text-[#222]">
        <div className="flex h-[19px] shrink-0 items-center justify-between bg-[#eef2fa] pl-[5px] pr-[6px]"><span className="tracking-[-0.070px]">Round Tracks</span><X className="size-[9px]" strokeWidth={1.6} /></div>
        <div className="flex h-[16px] shrink-0 items-center whitespace-nowrap pl-[2.500px]">See github page for instructions. Always run DRC after rounding!</div>
        <div className="ml-[2px] h-[49px] w-[225px] shrink-0 border border-[#bbb] bg-white">
          <div className="flex h-[12px] items-center"><span className="w-[80px] pl-[4px]">Net Class</span><span className="w-[40px] pl-[4px]">Rounding</span><span className="w-[49px] whitespace-nowrap border-l border-[#ddd] pl-[3px]">Radius (mm)</span><span className="pl-[4px]">Passes #</span></div>
          <div className="flex h-[14px] items-center bg-[#cbcbcb]">
            <span className="w-[80px] pl-[2px]">Default</span><span className="flex w-[40px] justify-center"><Box on c="size-[8px] rounded-[2px]" /></span>
            <span className="flex h-[14px] w-[50px] items-center border-b border-[#1f7acb] bg-white pl-[3.500px]">6.0</span><span className="pl-[1px]">3</span>
          </div>
        </div>
        <div className="flex h-[15px] shrink-0 items-center whitespace-nowrap pl-[2px]">
          <span className="flex w-[74px] items-center gap-[2.500px]"><Box on={false} c="size-[8px]" />create a new file</span>
          <span className="flex w-[73px] items-center gap-[2.500px]"><Box on c="size-[8px]" />use native fillets</span>
          <span className="flex items-center gap-[2px]"><Box on={false} c="size-[8px]" />ignore junctions</span>
        </div>
        <div className="flex h-[19px] shrink-0 items-center pl-[4px]">
          <span className="mr-[4px] flex h-[13px] w-[57px] items-center justify-center rounded-[2px] border border-[#ddd] bg-[#fdfdfd]">Run</span>
          <span className="flex h-[13px] w-[100px] items-center justify-center whitespace-nowrap rounded-[2px] border border-[#ddd] bg-[#fdfdfd]">Unround (native fillets only)</span>
          <svg viewBox="0 0 8 8" className="ml-auto mt-[10px] size-[6px]"><path d="M1 8l7-7M4 8l4-4" stroke="#aaa" /></svg>
        </div>
      </div>
      <svg viewBox="0 0 236 3" className="h-[3px] w-full"><path d="M48 0h2v2h-2z" fill="#bd3342" /><path d="M122 0v3" stroke="#ccc" /></svg>
    </div>
  );
}

export default function App() {
  return (
    <main className={`relative h-[540px] w-[960px] overflow-hidden bg-white ${FONT}`}>
      <SmallWindow />
      <Menus />
      <MainWindow />
      <Dialog />
      <svg width="140" height="110" viewBox="205 200 140 110" className="absolute left-[205px] top-[200px]">
        <path d="M213 298L321 216" stroke="#f00b0b" strokeWidth="2.800" />
        <path d="M334 205.500L314.500 212L325.500 223.500Z" fill="#f00b0b" />
      </svg>
    </main>
  );
}
